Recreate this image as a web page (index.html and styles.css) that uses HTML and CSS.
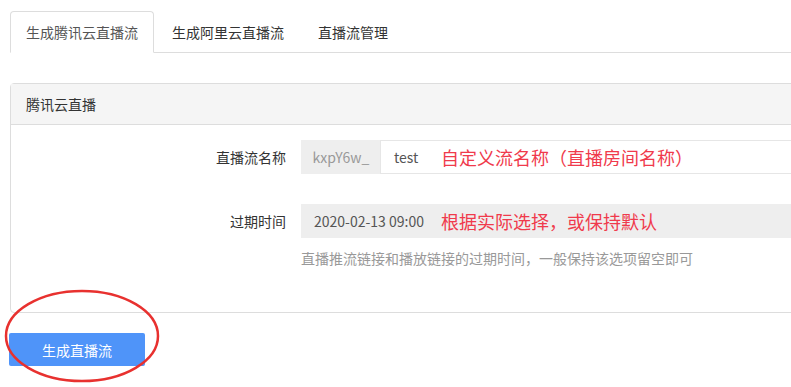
FILE: index.html
```html
<!DOCTYPE html>
<html lang="zh-CN">
<head>
    <meta charset="UTF-8">
    <title>直播流</title>
    <link rel="stylesheet" href="styles.css">
</head>
<body>
    <div class="page">
        <ul class="tabs">
            <li class="tab active">生成腾讯云直播流</li>
            <li class="tab">生成阿里云直播流</li>
            <li class="tab">直播流管理</li>
        </ul>

        <div class="panel">
            <div class="panel-heading">腾讯云直播</div>
            <div class="panel-body">
                <div class="form-row">
                    <label class="form-label">直播流名称</label>
                    <div class="input-group">
                        <span class="addon">kxpY6w_</span>
                        <div class="input"><span class="value">test</span><span class="note">自定义流名称（直播房间名称）</span></div>
                    </div>
                </div>
                <div class="form-row">
                    <label class="form-label">过期时间</label>
                    <div class="field">
                        <div class="input readonly"><span class="value">2020-02-13 09:00</span><span class="note">根据实际选择，或保持默认</span></div>
                        <p class="help">直播推流链接和播放链接的过期时间，一般保持该选项留空即可</p>
                    </div>
                </div>
            </div>
        </div>

        <div class="actions">
            <button class="btn-primary">生成直播流</button>
            <svg class="circle" width="160" height="96" viewBox="0 0 160 96">
                <ellipse cx="80" cy="48" rx="76" ry="45" fill="none" stroke="#e8312f" stroke-width="2.5"/>
            </svg>
        </div>
    </div>
</body>
</html>
```

FILE: styles.css
```css
html {
    overflow: hidden;
}

body {
    margin: 0;
    font-family: "Noto Sans CJK SC", "Noto Sans", sans-serif;
    font-size: 14px;
    line-height: 20px;
    color: #333;
    background-color: #fff;
}

.page {
    width: 820px;
    padding: 11px 0 20px 10px;
}

.tabs {
    display: flex;
    margin: 0;
    padding: 0;
    list-style: none;
    border-bottom: 1px solid #ddd;
}

.tab {
    height: 40px;
    line-height: 40px;
    padding: 0 15px;
    margin-bottom: -1px;
    border: 1px solid transparent;
    border-radius: 4px 4px 0 0;
    color: #333;
    margin-right: 2px;
}

.tab.active {
    border-color: #ddd;
    border-bottom-color: #fff;
    background-color: #fff;
    color: #555;
}

.panel {
    margin-top: 30px;
    border: 1px solid #ddd;
    border-radius: 4px;
}

.panel-heading {
    height: 40px;
    line-height: 40px;
    padding-left: 15px;
    background-color: #f5f5f5;
    border-bottom: 1px solid #ddd;
}

.panel-body {
    padding: 15px 0 44px;
}

.form-row {
    display: flex;
    align-items: flex-start;
    margin-bottom: 30px;
}

.form-row:last-child {
    margin-bottom: 0;
}

.form-label {
    width: 275px;
    padding-right: 15px;
    text-align: right;
    line-height: 34px;
    flex-shrink: 0;
}

.input-group {
    display: flex;
    flex: 1;
}

.addon {
    width: 79px;
    height: 34px;
    line-height: 32px;
    text-align: center;
    background-color: #eee;
    border: 1px solid #eee;
    border-right: none;
    color: #999;
    box-sizing: border-box;
    flex-shrink: 0;
}

.input {
    flex: 1;
    height: 34px;
    box-sizing: border-box;
    border: 1px solid #e6e6e6;
    display: flex;
    align-items: center;
    padding-left: 13px;
    color: #555;
}

.input.readonly {
    background-color: #eee;
    border-color: #eee;
    padding-left: 12px;
}

.field {
    flex: 1;
}

.value {
    width: 47px;
    flex-shrink: 0;
}

.readonly .value {
    width: 127px;
}

.note {
    color: #f03a4c;
    font-size: 18px;
}

.help {
    margin: 10px 0 0;
    color: #999;
}

.actions {
    position: relative;
    padding-top: 20px;
}

.btn-primary {
    display: block;
    margin-left: -1px;
    width: 136px;
    height: 33px;
    border: none;
    border-radius: 2px;
    background-color: #4f94f9;
    color: #fff;
    font-family: inherit;
    font-size: 14px;
}

.circle {
    position: absolute;
    left: -8px;
    top: -25px;
}
```
